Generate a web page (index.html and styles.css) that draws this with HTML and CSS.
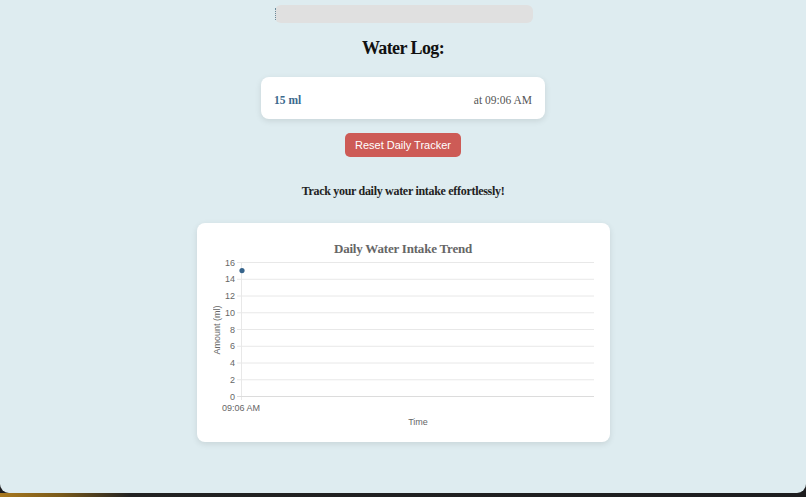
FILE: index.html
```html
<!DOCTYPE html>
<html>
<head>
<meta charset="utf-8">
<link rel="stylesheet" href="styles.css">
</head>
<body>
<div class="window">
  <div class="progress"><span class="broken"></span></div>
  <h1 class="title">Water Log:</h1>
  <div class="log-card">
    <span class="amount">15 ml</span>
    <span class="time">at 09:06 AM</span>
  </div>
  <button class="reset">Reset Daily Tracker</button>
  <p class="tagline">Track your daily water intake effortlessly!</p>
  <div class="chart-card">
    <h2 class="chart-title">Daily Water Intake Trend</h2>
    <svg class="chart" width="381" height="172" viewBox="0 0 381 172">
      <g stroke="#e8e8e8" stroke-width="1">
        <line x1="24" y1="5.5" x2="381" y2="5.5"/>
        <line x1="24" y1="22.25" x2="381" y2="22.25"/>
        <line x1="24" y1="39" x2="381" y2="39"/>
        <line x1="24" y1="55.75" x2="381" y2="55.75"/>
        <line x1="24" y1="72.5" x2="381" y2="72.5"/>
        <line x1="24" y1="89.25" x2="381" y2="89.25"/>
        <line x1="24" y1="106" x2="381" y2="106"/>
        <line x1="24" y1="122.75" x2="381" y2="122.75"/>
        <line x1="28.5" y1="5" x2="28.5" y2="143"/>
      </g>
      <line x1="24" y1="139.5" x2="381" y2="139.5" stroke="#dcdcdc" stroke-width="1"/>
      <g class="tick" text-anchor="end">
        <text x="22" y="8.5">16</text>
        <text x="22" y="25.25">14</text>
        <text x="22" y="42">12</text>
        <text x="22" y="58.75">10</text>
        <text x="22" y="75.5">8</text>
        <text x="22" y="92.25">6</text>
        <text x="22" y="109">4</text>
        <text x="22" y="125.75">2</text>
        <text x="22" y="142.5">0</text>
      </g>
      <text class="tick" x="28" y="154" text-anchor="middle">09:06 AM</text>
      <text class="tick" x="205" y="168" text-anchor="middle">Time</text>
      <text class="tick" transform="translate(7 73) rotate(-90)" text-anchor="middle">Amount (ml)</text>
      <circle cx="29" cy="13.6" r="2.6" fill="#36648b"/>
    </svg>
  </div>
</div>
<div class="dock"></div>
</body>
</html>
```
FILE: styles.css
```css
html, body {
  margin: 0;
  padding: 0;
  background: #1d1d1f;
  height: 497px;
  overflow: hidden;
}
.window {
  height: 493px;
  background: #deecf0;
  border-radius: 0 0 9px 9px;
  display: flex;
  flex-direction: column;
  align-items: center;
  font-family: "Liberation Serif", serif;
}
.progress {
  margin-top: 5px;
  width: 258px;
  height: 18px;
  background: #e0e0e0;
  border-radius: 6px;
  position: relative;
  margin-left: 1px;
}
.broken {
  position: absolute;
  left: 0;
  top: 3px;
  width: 3px;
  height: 12px;
  border-left: 1px dotted #6a8a9a;
}
.title {
  margin: 14px 0 0;
  font-size: 18px;
  line-height: 22px;
  letter-spacing: -0.6px;
  font-weight: bold;
  color: #111;
}
.log-card {
  margin-top: 18px;
  width: 258px;
  height: 39px;
  padding: 3px 13px 0;
  background: #fff;
  border-radius: 8px;
  box-shadow: 0 2px 6px rgba(0,0,0,0.1);
  display: flex;
  align-items: center;
  justify-content: space-between;
  font-size: 11.5px;
}
.amount {
  color: #3b6a8e;
  font-weight: bold;
}
.time {
  color: #555;
}
.reset {
  margin-top: 14px;
  width: 116px;
  height: 24px;
  border: none;
  border-radius: 5px;
  background: #cd5b56;
  color: #fff;
  font-family: "Liberation Sans", Arial, sans-serif;
  font-size: 11px;
  padding: 0;
}
.tagline {
  margin: 26px 0 0;
  font-size: 12px;
  line-height: 16px;
  letter-spacing: -0.3px;
  font-weight: bold;
  color: #222;
}
.chart-card {
  margin-top: 24px;
  width: 381px;
  height: 201px;
  padding: 18px 16px 0;
  background: #fff;
  border-radius: 8px;
  box-shadow: 0 2px 6px rgba(0,0,0,0.1);
}
.chart-title {
  margin: 0;
  text-align: center;
  font-size: 13px;
  line-height: 16px;
  letter-spacing: -0.2px;
  color: #666;
  font-weight: bold;
}
.chart {
  display: block;
}
.tick {
  font-family: "Liberation Sans", Arial, sans-serif;
  font-size: 9px;
  fill: #666;
}
.dock {
  height: 4px;
  background: linear-gradient(90deg, #a8781e 0, #7a5a1a 60px, #222 130px, #1d1d1f 100%);
}
```
